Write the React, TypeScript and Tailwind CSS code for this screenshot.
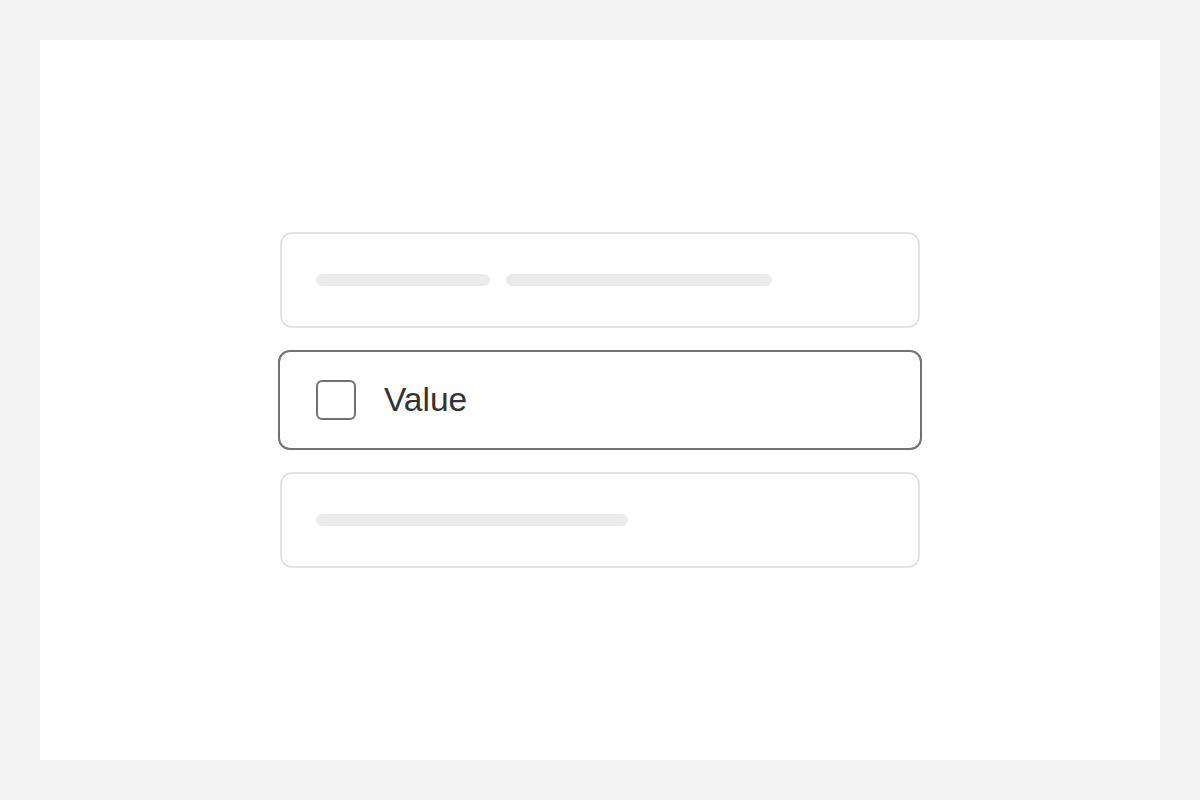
import React from 'react';

const Bar: React.FC<{ width: string }> = ({ width }) => (
  <div className={`h-3 rounded-full bg-[#ebebeb] ${width}`} />
);

export default function App() {
  return (
    <div className="min-h-[800px] w-full bg-[#f4f4f4] p-10">
      <div className="flex h-[720px] flex-col items-center justify-center bg-white">
        <div className="flex w-[640px] flex-col gap-6">
          {/* placeholder row */}
          <div className="flex h-24 items-center gap-4 rounded-xl border-2 border-[#e3e3e3] px-[34px]">
            <Bar width="w-[174px]" />
            <Bar width="w-[266px]" />
          </div>

          {/* selected row */}
          <div className="-mx-[2px] -my-[2px] flex h-[100px] items-center gap-[28px] rounded-xl border-2 border-[#717171] px-9">
            <div className="h-10 w-10 rounded-md border-2 border-[#717171]" />
            <span className="text-[33.5px] leading-none text-[#333333] [font-family:'Liberation_Sans',Arial,sans-serif]">
              Value
            </span>
          </div>

          {/* placeholder row */}
          <div className="flex h-24 items-center rounded-xl border-2 border-[#e3e3e3] px-[34px]">
            <Bar width="w-[312px]" />
          </div>
        </div>
      </div>
    </div>
  );
}
